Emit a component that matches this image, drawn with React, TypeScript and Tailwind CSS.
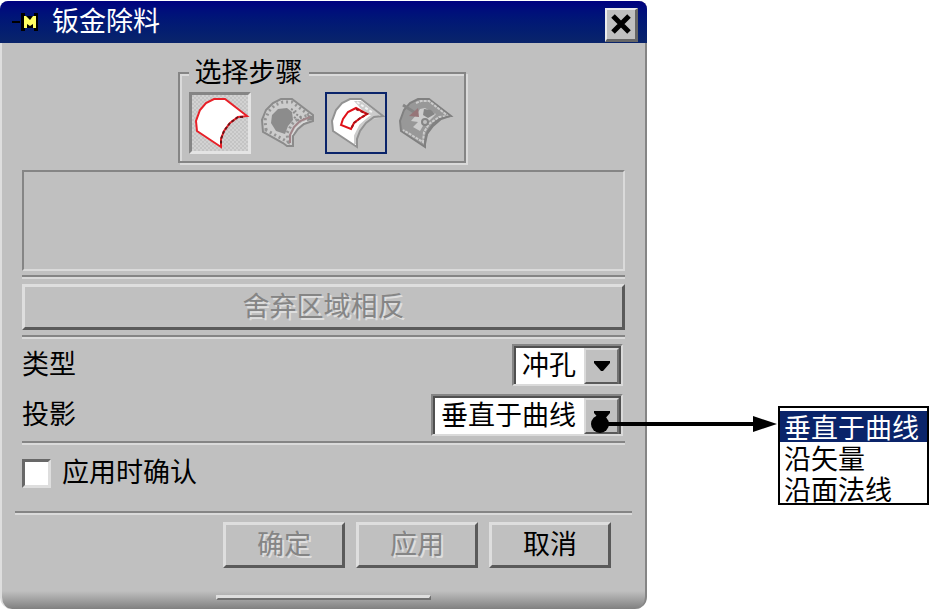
import type { ReactNode } from "react";

const FONT = "font-['Liberation_Sans','Noto_Sans_CJK_SC',sans-serif]";
const SHEET = "M8 39 L7 29 L11 18 L17 11 L25 7 H36 L58 24 L49 25 L41 31 L35 39 L32 47 V55 Z";

function PinIcon() {
  return (
    <svg className="h-7 w-7" viewBox="0 0 28 28" aria-hidden="true">
      <path d="M0 14H8" stroke="#000" strokeWidth="2" />
      <path d="M9 5H13V8H22V5H26V23H22V20H13V23H9Z" fill="#000" />
      <path d="M12 8H14L18 12L21 8H24V20H21V16L18 18L15 16V20H12Z" fill="#ffff64" />
    </svg>
  );
}

function CloseIcon() {
  return (
    <svg className="h-5 w-5" viewBox="0 0 20 20" aria-hidden="true">
      <path d="M2 2L18 18M18 2L2 18" stroke="#000" strokeWidth="5" />
    </svg>
  );
}

function TargetFaceIcon() {
  return (
    <svg className="-m-[3px] h-[62px] w-[62px] max-w-none" viewBox="0 0 62 62" aria-hidden="true">
      <path d={SHEET} fill="#fff" stroke="#e82028" strokeWidth="2" />
      <path d="M54 25L49 25L41 31L35 39L32 47V53" fill="none" stroke="#6e1216" strokeWidth="2" strokeDasharray="3 2" />
    </svg>
  );
}

function SectionFaceIcon() {
  return (
    <svg className="h-[62px] w-[62px]" viewBox="0 0 62 62" aria-hidden="true">
      <path
        d="M6 40L5 28L9 18L16 11L24 7H35L56 23V29L47 32L41 37L36 44V54H30L26 51Z"
        fill="#cccccc"
        stroke="#8b8b8b"
        strokeWidth="2"
      />
      <path
        d="M9 38L8 28L12 19L18 13L26 10H35L52 23L42 26L35 32L30 41L31 50Z"
        fill="none"
        stroke="#949494"
        strokeWidth="3"
        strokeDasharray="2 3"
      />
      <path d="M14 31L15 23L21 17L30 16L35 20L36 28L31 34L28 42L19 39Z" fill="#8c8c8c" />
      <path d="M36 20L48 28M37 25L44 30M34 17L40 20" stroke="#8b8b8b" strokeWidth="2" strokeDasharray="2 2" />
      <path d="M51 23L55 24V28L50 29Z" fill="#8b8b8b" />
      <path d="M53 25L43 29L37 35L33 43V51" fill="none" stroke="#a08488" strokeWidth="2" />
      <path d="M50 29L45 31L39 36L35 43" fill="none" stroke="#dedede" />
    </svg>
  );
}

function ProfileIcon() {
  return (
    <svg className="h-[62px] w-[62px]" viewBox="0 0 62 62" aria-hidden="true">
      <path d={SHEET} fill="#fff" />
      <path d="M29 9H36L56 23L48 25L38 19Z" fill="#cccccc" />
      <path d="M32 10L48 21" stroke="#f4f4f4" strokeWidth="2" strokeDasharray="3 2" />
      <path d="M54 24L45 26L36 34L31 44V52" fill="none" stroke="#cccccc" strokeWidth="4" />
      <path d={SHEET} fill="none" stroke="#929292" strokeWidth="2" />
      <path d="M16 33L18 27L23 20L31 16L42 22L34 27L29 31L26 37Z" fill="#fff" stroke="#e01018" strokeWidth="2" />
      <path d="M31 17L42 22L34 27L29 31L26 37" fill="none" stroke="#a51218" strokeWidth="2" strokeDasharray="3 2" />
    </svg>
  );
}

function ToolIcon() {
  return (
    <svg className="h-[62px] w-[62px]" viewBox="0 0 62 62" aria-hidden="true">
      <path d={SHEET} fill="#989898" stroke="#808080" strokeWidth="2" />
      <path d="M23 11L28 9H36L55 24L46 25L36 32L31 40L30 50L10 38" fill="none" stroke="#cccccc" strokeWidth="2" strokeDasharray="3 1" />
      <path d="M18 29L24 22L27 17L32 16L43 22L37 28L31 32L27 39L20 35L25 30Z" fill="#cccccc" />
      <path d="M31 17L38 18L42 22L35 26L30 23Z" fill="#858585" />
      <circle cx="32" cy="30" r="3" fill="#c0c0c0" stroke="#858585" strokeWidth="2" />
      <path d="M10 13L24 22" stroke="#858585" strokeWidth="3" />
      <path d="M16 24L26 25L25 16Z" fill="#967578" />
      <path d="M57 24L48 27L40 34L34 42L32 52" fill="none" stroke="#808080" strokeWidth="2" />
    </svg>
  );
}

function Rule() {
  return <hr className="m-0 h-1 border-0 border-t-2 border-b-2 border-t-[#858585] border-b-[#dadada]" />;
}

function StepButton({ label, look, children }: { label: string; look: string; children: ReactNode }) {
  return (
    <button type="button" aria-label={label} className={`h-[62px] w-[62px] ${look}`}>
      {children}
    </button>
  );
}

function PushButton({ children, className, disabled }: { children: string; className: string; disabled?: boolean }) {
  return (
    <button
      type="button"
      disabled={disabled}
      className={`flex h-[46px] items-center justify-center border-3 border-t-[#dedede] border-r-[#5a5a5a] border-b-[#5a5a5a] border-l-[#dedede] bg-[#c0c0c0] text-black disabled:text-[#858585] disabled:[text-shadow:2px_2px_0_#dedede] ${className}`}
    >
      {children}
    </button>
  );
}

function Dropdown({ id, options, width }: { id: string; options: string[]; width: string }) {
  return (
    <div className={`relative h-[42px] border-2 border-t-[#858585] border-r-[#dadada] border-b-[#dadada] border-l-[#858585] ${width}`}>
      <select
        id={id}
        className="block h-full w-full appearance-none border-t-2 border-r-2 border-l-2 border-[#505050] bg-white pl-[6px] leading-8 text-black outline-none"
      >
        {options.map((o) => (
          <option key={o}>{o}</option>
        ))}
      </select>
      <span className="pointer-events-none absolute top-[2px] right-[2px] bottom-0 flex w-[35px] items-center justify-center border-2 border-t-[#dadada] border-r-[#707070] border-b-[#5a5a5a] border-l-[#dadada] bg-[#c0c0c0]">
        <svg className="h-[10px] w-4" viewBox="0 0 16 10" aria-hidden="true">
          <path d="M0 0H16V2L9 10H7L0 2Z" fill="#000" />
        </svg>
      </span>
    </div>
  );
}

export default function App() {
  return (
    <main className={`flex items-start bg-white pt-px text-[27px] leading-8 text-black ${FONT}`}>
      <section
        aria-labelledby="dialog-title"
        className="min-w-0 flex-1 rounded-t-lg rounded-b-xl border-r-2 border-l-2 border-r-[#858585] border-l-[#dedede] bg-[linear-gradient(to_top,#808080,#c0c0c0_18px)]"
      >
        <header className="-mx-[2px] flex h-[42px] items-center rounded-t-lg bg-linear-to-b from-[#000080] to-[#0a246a] pr-[9px] pl-3">
          <PinIcon />
          <h1 id="dialog-title" className="ml-3 flex-1 text-white">
            钣金除料
          </h1>
          <button
            type="button"
            aria-label="关闭"
            className="mt-[6px] flex h-[34px] w-[33px] items-center justify-center border-t-2 border-r-3 border-b-3 border-l-2 border-t-[#ececec] border-r-[#666] border-b-[#666] border-l-[#ececec] bg-[#c0c0c0] pr-px pb-[2px]"
          >
            <CloseIcon />
          </button>
        </header>

        <div className="px-5 pt-[14px]">
          <fieldset className="relative mx-auto mb-[7px] flex w-[290px] flex-col pt-[15px] pr-1">
            <legend className="absolute top-0 left-[11px] z-10 bg-[#c0c0c0] px-[6px]">选择步骤</legend>
            <div className="border-2 border-[#858585] p-[2px] shadow-[2px_2px_0_#dadada,inset_2px_2px_0_#dadada]">
              <div className="flex gap-[6px] px-[7px] pt-4 pb-[5px]">
                <StepButton
                  label="目标面"
                  look="border-3 border-t-[#858585] border-l-[#858585] border-r-[#e4e4e4] border-b-[#e4e4e4] bg-[repeating-conic-gradient(#d2d2d2_0_25%,#c4c4c4_0_50%)] bg-size-[4px_4px]"
                >
                  <TargetFaceIcon />
                </StepButton>
                <StepButton label="截面" look="">
                  <SectionFaceIcon />
                </StepButton>
                <StepButton label="轮廓" look="outline-2 -outline-offset-2 outline-[#0a246a]">
                  <ProfileIcon />
                </StepButton>
                <StepButton label="工具体" look="">
                  <ToolIcon />
                </StepButton>
              </div>
            </div>
          </fieldset>

          <div className="mb-1 h-[101px] border-2 border-t-[#858585] border-r-[#dadada] border-b-[#dadada] border-l-[#858585]" />
          <Rule />
          <PushButton disabled className="my-[5px] w-full">
            舍弃区域相反
          </PushButton>
          <Rule />

          <div className="mt-[5px] flex items-center justify-between pr-[2px]">
            <label htmlFor="type">类型</label>
            <Dropdown id="type" options={["冲孔"]} width="w-[111px]" />
          </div>
          <div className="mt-2 mb-[5px] flex items-center justify-between pr-[2px]">
            <label htmlFor="projection">投影</label>
            <div className="relative">
              <Dropdown id="projection" options={["垂直于曲线", "沿矢量", "沿面法线"]} width="w-[192px]" />
              <svg
                className="pointer-events-none absolute top-5 left-[160px] h-5 w-[188px]"
                viewBox="0 0 188 20"
                aria-hidden="true"
              >
                <circle cx="9" cy="10" r="9" />
                <path d="M9 10H166" stroke="#000" strokeWidth="4" />
                <path d="M162 2L186 10L162 18Z" />
              </svg>
            </div>
          </div>
          <Rule />

          <label className="mt-3 flex w-fit items-center gap-[11px]">
            <input
              type="checkbox"
              className="h-[29px] w-[29px] appearance-none border-3 border-t-[#686868] border-r-[#dedede] border-b-[#dedede] border-l-[#686868] bg-white"
            />
            应用时确认
          </label>
        </div>

        <div className="mx-[13px] mt-[22px]">
          <Rule />
        </div>
        <div className="mt-[7px] flex justify-end gap-[11px] pr-[34px]">
          <PushButton disabled className="w-[122px]">
            确定
          </PushButton>
          <PushButton disabled className="w-[122px]">
            应用
          </PushButton>
          <PushButton className="w-[122px]">取消</PushButton>
        </div>
        <div className="mx-auto mt-[27px] mb-[9px] h-[5px] w-[215px] border-t-3 border-r-2 border-b-2 border-l-2 border-t-[#dedede] border-r-[#707070] border-b-[#707070] border-l-[#dedede]" />
      </section>

      <aside className="w-[282px] shrink-0 pt-[405px] pl-[131px]">
        <select
          size={3}
          defaultValue="垂直于曲线"
          aria-label="投影选项"
          className="block h-[99px] w-full appearance-none overflow-hidden rounded-none border-2 border-black bg-white pt-[3px] text-black outline-none"
        >
          <option className="flex h-[31px] min-h-0 items-center p-0 pl-1 checked:bg-[#0a246a] checked:bg-linear-to-b checked:from-[#0a246a] checked:to-[#0a246a] checked:text-white">
            垂直于曲线
          </option>
          <option className="flex h-[31px] min-h-0 items-center p-0 pl-1">沿矢量</option>
          <option className="flex h-[31px] min-h-0 items-center p-0 pl-1">沿面法线</option>
        </select>
      </aside>
    </main>
  );
}
